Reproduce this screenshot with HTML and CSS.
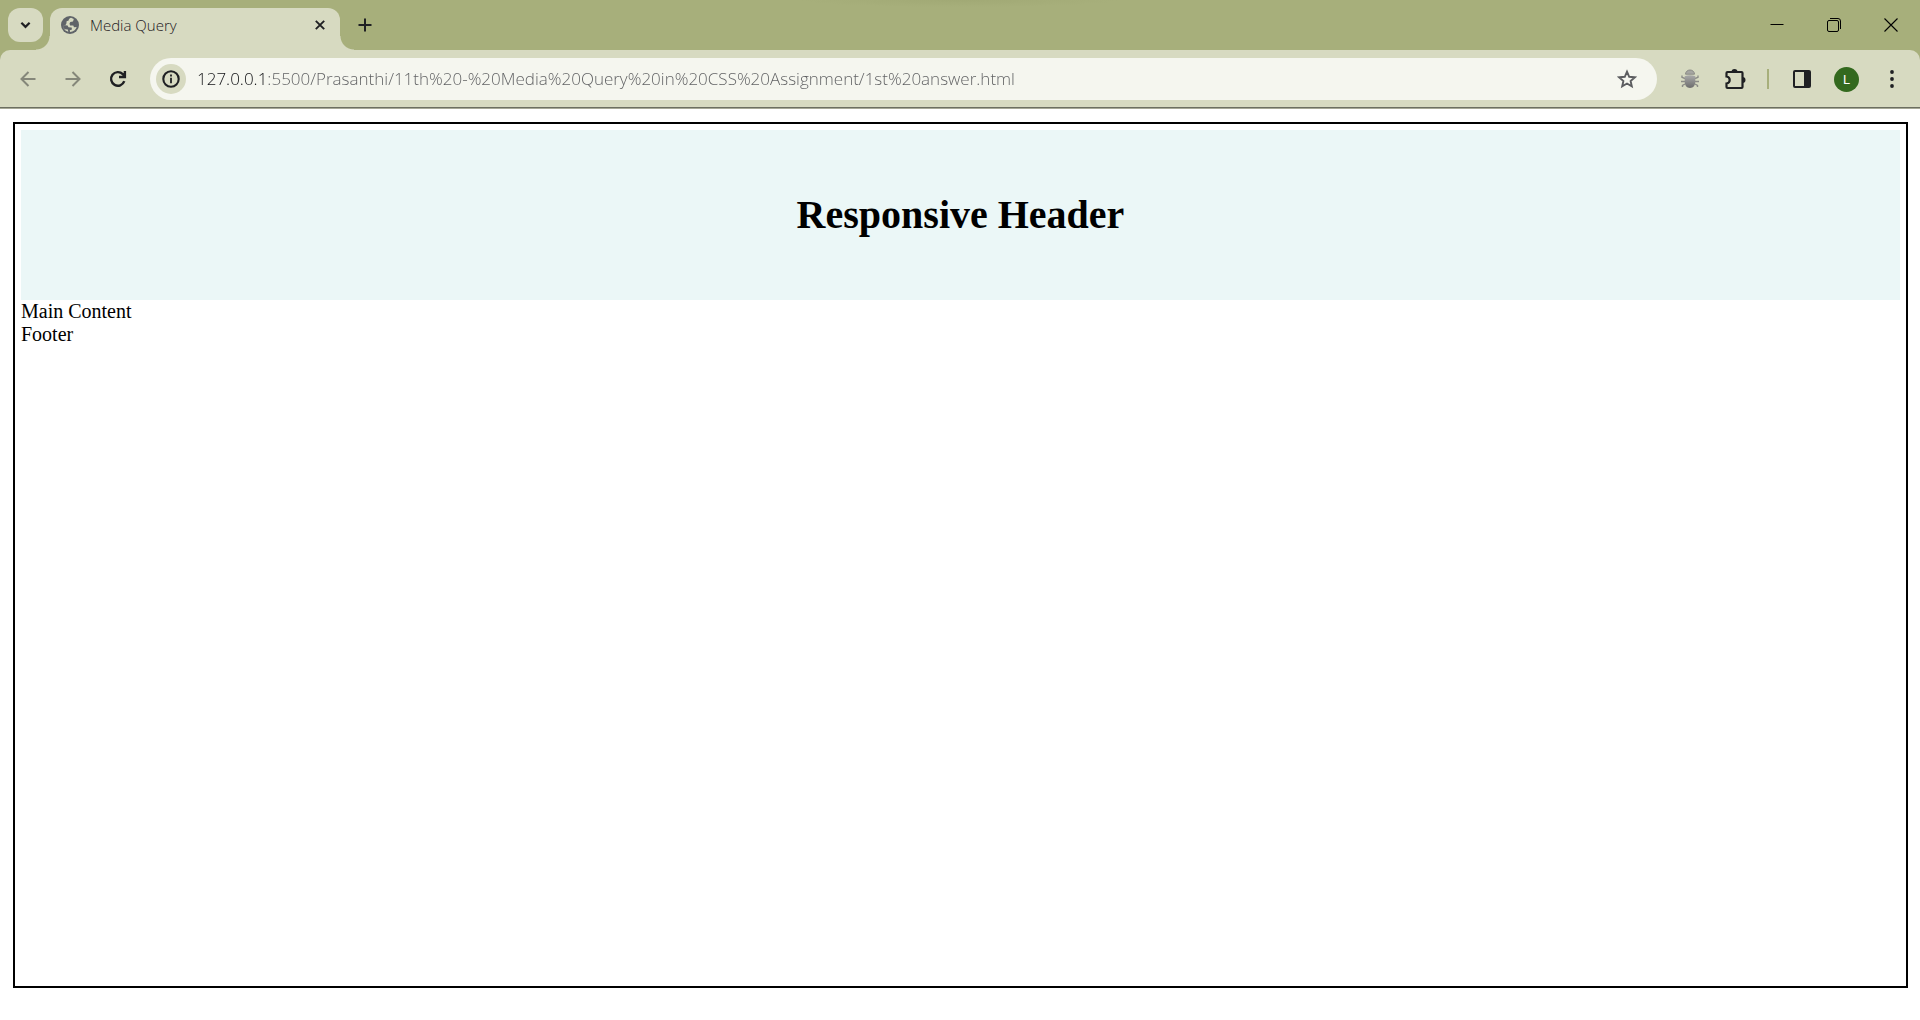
FILE: index.html
```html
<!DOCTYPE html>
<html lang="en">
<head>
<meta charset="utf-8">
<meta name="viewport" content="width=device-width, initial-scale=1">
<title>Media Query</title>
<link rel="stylesheet" href="styles.css">
</head>
<body>
<div class="browser">
  <div class="tabstrip">
    <button class="tab-search" aria-label="Search tabs">
      <svg width="11" height="8" viewBox="0 0 12 8"><path d="M1.5 1.5 6 6l4.500-4.500" fill="none" stroke="#1f2023" stroke-width="2.400"/></svg>
    </button>
    <div class="tab">
      <svg class="globe" width="18" height="18" viewBox="0 0 18 18"><circle cx="9" cy="9" r="9" fill="#5f6368"/><path d="M10 1.800C8.300 2.300 7.500 3.400 7.700 4.600L5.600 5.200 5.400 7.400 8.500 7.600 9 9.400H12.300L13 11.200 15.700 11C14.700 14 12.400 15.900 9 16L8.800 14.300 11 13.500 10.600 11.600 7.500 11.200 6.600 9.500 2 9C2.100 10.500 2.600 12 3.600 13.300L6.800 13.500 7.300 15.700C4 15 1.900 12.300 2 9L4.500 8.900 5.400 7.400 8.500 7.600 9.300 6 12 5.600 12.800 3Z" fill="#d7dac1"/></svg>
      <span class="tab-title">Media Query</span>
      <button class="tab-close" aria-label="Close tab">
        <svg width="10" height="10" viewBox="0 0 10 10"><path d="m.800.800 8.400 8.400M9.200.800.800 9.200" stroke="#1f2023" stroke-width="1.900"/></svg>
      </button>
    </div>
    <button class="new-tab" aria-label="New tab">
      <svg width="14" height="14" viewBox="0 0 14 14"><path d="M7 .500v13M.500 7h13" stroke="#1f2023" stroke-width="2"/></svg>
    </button>
    <div class="window-controls">
      <button aria-label="Minimize"><svg width="14" height="14" viewBox="0 0 14 14"><path d="M.500 6.500h13" stroke="#000"/></svg></button>
      <button aria-label="Restore"><svg width="14" height="14" viewBox="0 0 14 14" fill="none" stroke="#000"><rect x=".500" y="2.500" width="11" height="11" rx="1.500"/><path d="M3 .500h8q2.500 0 2.500 2.500v8"/></svg></button>
      <button aria-label="Close"><svg width="14" height="14" viewBox="0 0 14 14"><path d="m.500.500 13 13m0-13-13 13" stroke="#000" stroke-width="1.100"/></svg></button>
    </div>
  </div>
  <div class="toolbar">
    <button class="tool" aria-label="Back"><svg width="16" height="16" viewBox="0 0 16 16" fill="none" stroke="#85877a" stroke-width="2"><path d="M15.500 8H2M8.500 1 1.500 8l7 7"/></svg></button>
    <button class="tool" aria-label="Forward"><svg width="16" height="16" viewBox="0 0 16 16" fill="none" stroke="#85877a" stroke-width="2"><path d="M.500 8H14M7.500 1l7 7-7 7"/></svg></button>
    <button class="tool" aria-label="Reload"><svg width="18" height="18" viewBox="0 0 18 18" fill="none" stroke="#1f2023" stroke-width="2.400"><path d="M15.300 11.200A6.800 6.800 0 1 1 13.800 4.200L15.500 6M15.900 1v6H10"/></svg></button>
    <div class="address">
      <button class="site-info" aria-label="View site information"><svg width="18" height="18" viewBox="0 0 18 18"><circle cx="9" cy="9" r="7.700" fill="none" stroke="#1f2023" stroke-width="2.100"/><path d="M9 7.800v5.400M9 4.600v1.900" stroke="#1f2023" stroke-width="1.800"/></svg></button>
      <input class="url" type="text" aria-label="Address" spellcheck="false" value="127.0.0.1:5500/Prasanthi/11th%20-%20Media%20Query%20in%20CSS%20Assignment/1st%20answer.html">
      <button class="bookmark" aria-label="Bookmark this tab"><svg width="20" height="20" viewBox="0 0 20 20"><path d="m10 2.700 2.200 5.100 5.600.5-4.200 3.700 1.200 5.400-4.800-2.900-4.800 2.900 1.200-5.400-4.200-3.700 5.600-.5Z" fill="none" stroke="#5c5d60" stroke-width="1.900"/></svg></button>
    </div>
    <div class="extensions">
      <button class="tool" aria-label="Bug extension"><svg width="18" height="20" viewBox="0 0 18 20"><defs><linearGradient id="shell" x2="0" y2="1"><stop stop-color="#aaa"/><stop offset="1" stop-color="#6c6c6c"/></linearGradient></defs><path d="M4 9.500 1 8.300V6.500M4 12.500H0M4 15l-2.500 1.500V18M14 9.500l3-1.200V6.500M14 12.500h4M14 15l2.500 1.500V18" fill="none" stroke="#8b8b86" stroke-width="1.400"/><path d="M4.500 5.200a4.500 4.200 0 0 1 9 0Z" fill="#a6a6a2" stroke="#8b8b86"/><path d="M3.700 7.200q5.300-2 10.600 0v5.500q0 6-5.300 6.300-5.300-.3-5.300-6.300Z" fill="url(#shell)"/></svg></button>
      <button class="tool" aria-label="Extensions"><svg width="22" height="22" viewBox="0 0 22 22"><path d="M3.500 4h14q1 0 1 1v14q0 1-1 1h-14q-1 0-1-1v-3.500q3.200-.5 3.200-3.500T2.500 8.500V5q0-1 1-1Z" fill="none" stroke="#1f2023" stroke-width="2.200"/><path d="M7.500 4a3 3 0 0 1 6 0ZM18.500 9a3 3 0 0 1 0 6Z" fill="#1f2023"/></svg></button>
      <span class="divider"></span>
      <button class="tool" aria-label="Side panel"><svg width="18" height="18" viewBox="0 0 18 18"><rect x="1" y="1" width="16" height="16" rx="1" fill="none" stroke="#1f2023" stroke-width="2"/><path d="M11 1h6v16h-6Z" fill="#1f2023"/></svg></button>
      <button class="tool" aria-label="Profile"><span class="avatar">L</span></button>
      <button class="tool" aria-label="Menu"><svg width="4" height="18" viewBox="0 0 4 18" fill="#1f2023"><circle cx="2" cy="2" r="1.900"/><circle cx="2" cy="9" r="1.900"/><circle cx="2" cy="16" r="1.900"/></svg></button>
    </div>
  </div>
</div>
<div class="container">
  <header class="header"><h1>Responsive Header</h1></header>
  <main>Main Content</main>
  <footer>Footer</footer>
</div>
</body>
</html>
```

FILE: styles.css
```css
* { box-sizing: border-box; }

body {
  margin: 0;
  min-height: 100vh;
  display: flex;
  flex-direction: column;
  background: #fff;
  color: #000;
  font: 20px/23px "Liberation Serif", "Times New Roman", serif;
}

button {
  display: flex;
  align-items: center;
  justify-content: center;
  padding: 0;
  border: 0;
  background: none;
  flex: none;
}

.browser {
  background: #a7af7b;
  font-family: "Open Sans", "Noto Sans", sans-serif;
}

.tabstrip {
  display: flex;
  height: 50px;
  padding: 8px 1px 0 8px;
  background: radial-gradient(160px 7px at 50% 0, #a1a975, transparent);
}

.tab-search {
  width: 35px;
  height: 34px;
  border-radius: 12px;
  background: #d7dac1;
}

.tab {
  position: relative;
  display: flex;
  align-items: center;
  width: 290px;
  height: 42px;
  margin-left: 7px;
  padding: 0 8px 8px 11px;
  border-radius: 12px 12px 0 0;
  background: #d7dac1;
}

/* Flared feet that join the active tab to the toolbar */
.tab::before,
.tab::after {
  content: "";
  position: absolute;
  bottom: 0;
  width: 14px;
  height: 14px;
}

.tab::before {
  right: 100%;
  background: radial-gradient(circle at 0 0, transparent 13px, #d7dac1 14px);
}

.tab::after {
  left: 100%;
  background: radial-gradient(circle at 100% 0, transparent 13px, #d7dac1 14px);
}

.globe { flex: none; }

.tab-title {
  flex: 1;
  margin-left: 11px;
  font-size: 15px;
  line-height: 20px;
  font-weight: 340;
  color: #1f2023;
}

.tab-close {
  width: 24px;
  height: 24px;
}

.new-tab {
  width: 34px;
  height: 34px;
  margin-left: 8px;
}

.window-controls {
  display: flex;
  margin-left: auto;
}

.window-controls button {
  width: 57px;
  height: 34px;
}

.toolbar {
  display: flex;
  align-items: center;
  padding: 8px 6px 7px 5px;
  border-radius: 10px 10px 0 0;
  border-bottom: 1px solid #6c6e61;
  background: #d7dac1;
  box-shadow: 0 1px #a6a896;
}

.tool {
  width: 45px;
  height: 42px;
}

.address {
  display: flex;
  align-items: center;
  flex: 1;
  height: 42px;
  margin: 0 10px;
  padding: 0 14px 0 6px;
  border-radius: 21px;
  background: #f5f6ef;
}

.site-info {
  width: 30px;
  height: 30px;
  border-radius: 50%;
  background: #d7dac1;
}

/* The host is dark, the rest of the address grey */
.url {
  flex: 1;
  min-width: 0;
  margin: 0 11px;
  padding: 0;
  border: 0;
  outline: 0;
  background: linear-gradient(to right, #101114 69px, #5c5d5f 69px);
  background-clip: text;
  color: transparent;
  font: 340 17px/24px "Open Sans", "Noto Sans", sans-serif;
}

.bookmark {
  width: 32px;
  height: 32px;
}

.extensions {
  display: flex;
  align-items: center;
}

.divider {
  width: 2px;
  height: 20px;
  margin: 0 10px;
  background: #a7af7b;
}

.avatar {
  width: 25px;
  height: 25px;
  border-radius: 50%;
  background: #33691e;
  color: #fff;
  font: 13px/25px Roboto, sans-serif;
}

.container {
  flex: 1;
  margin: 14px 12px 32px 13px;
  padding: 6px;
  border: 2px solid #000;
}

.header {
  padding: 62px 20px;
  background: #ebf7f7;
  text-align: center;
}

h1 {
  margin: 0;
  font-size: 40px;
  line-height: 46px;
}
```
